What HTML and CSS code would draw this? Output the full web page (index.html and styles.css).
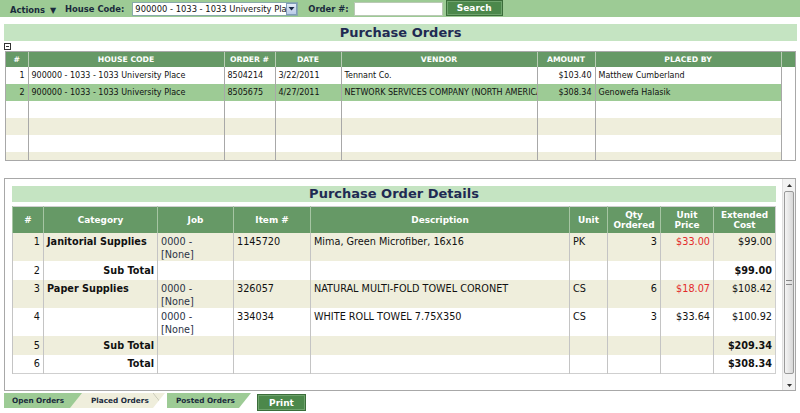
FILE: index.html
```html
<!DOCTYPE html>
<html>
<head>
<meta charset="utf-8">
<link rel="stylesheet" href="styles.css">
</head>
<body>
<div class="toolbar">
  <span class="lbl actions">Actions <span class="tri">▼</span></span>
  <span class="lbl house">House Code:</span>
  <div class="select"><span class="select-text">900000 - 1033 - 1033 University Place</span><span class="select-btn"><svg width="7" height="5" viewBox="0 0 7 5"><path d="M0.5 1h6L3.5 4.5z" fill="#1a2a44"/></svg></span></div>
  <span class="lbl order">Order #:</span>
  <div class="input"></div>
  <div class="btn search">Search</div>
</div>

<div class="title-bar">Purchase Orders</div>
<div class="toggle"><svg width="7" height="7" viewBox="0 0 7 7"><rect x="0.5" y="0.5" width="6" height="6" fill="#fff" stroke="#333"/><path d="M2 3.5h3" stroke="#333"/></svg></div>

<div class="po-wrap">
  <table class="po">
    <colgroup><col style="width:22px"><col style="width:196px"><col style="width:51px"><col style="width:66px"><col style="width:196px"><col style="width:58px"><col style="width:186px"><col></colgroup>
    <thead><tr><th>#</th><th>HOUSE CODE</th><th>ORDER #</th><th>DATE</th><th>VENDOR</th><th>AMOUNT</th><th>PLACED BY</th><th></th></tr></thead>
    <tbody>
      <tr class="odd"><td class="num">1</td><td>900000 - 1033 - 1033 University Place</td><td>8504214</td><td>3/22/2011</td><td>Tennant Co.</td><td class="r">$103.40</td><td>Matthew Cumberland</td><td class="gut"></td></tr>
      <tr class="sel"><td class="num">2</td><td>900000 - 1033 - 1033 University Place</td><td>8505675</td><td>4/27/2011</td><td>NETWORK SERVICES COMPANY (NORTH AMERICA)</td><td class="r">$308.34</td><td>Genowefa Halasik</td><td class="gut"></td></tr>
      <tr class="odd"><td></td><td></td><td></td><td></td><td></td><td></td><td></td><td class="gut"></td></tr>
      <tr class="even"><td></td><td></td><td></td><td></td><td></td><td></td><td></td><td class="gut"></td></tr>
      <tr class="odd"><td></td><td></td><td></td><td></td><td></td><td></td><td></td><td class="gut"></td></tr>
      <tr class="even"><td></td><td></td><td></td><td></td><td></td><td></td><td></td><td class="gut"></td></tr>
    </tbody>
  </table>
</div>

<div class="details">
  <div class="details-body">
    <div class="title-bar sub">Purchase Order Details</div>
    <table class="dt">
      <colgroup><col style="width:31px"><col style="width:114px"><col style="width:76px"><col style="width:77px"><col style="width:259px"><col style="width:38px"><col style="width:53px"><col style="width:53px"><col style="width:62px"></colgroup>
      <thead><tr><th>#</th><th>Category</th><th>Job</th><th>Item #</th><th>Description</th><th>Unit</th><th>Qty<br>Ordered</th><th>Unit<br>Price</th><th>Extended<br>Cost</th></tr></thead>
      <tbody>
        <tr class="even two"><td class="num">1</td><td class="b">Janitorial Supplies</td><td class="job">0000 -<br>[None]</td><td>1145720</td><td>Mima, Green Microfiber, 16x16</td><td>PK</td><td class="r">3</td><td class="r red">$33.00</td><td class="r">$99.00</td></tr>
        <tr class="odd one"><td class="num">2</td><td class="b r">Sub Total</td><td></td><td></td><td></td><td></td><td></td><td></td><td class="r b">$99.00</td></tr>
        <tr class="even two"><td class="num">3</td><td class="b">Paper Supplies</td><td class="job">0000 -<br>[None]</td><td>326057</td><td>NATURAL MULTI-FOLD TOWEL CORONET</td><td>CS</td><td class="r">6</td><td class="r red">$18.07</td><td class="r">$108.42</td></tr>
        <tr class="odd two"><td class="num">4</td><td></td><td class="job">0000 -<br>[None]</td><td>334034</td><td>WHITE ROLL TOWEL 7.75X350</td><td>CS</td><td class="r">3</td><td class="r">$33.64</td><td class="r">$100.92</td></tr>
        <tr class="even one"><td class="num">5</td><td class="b r">Sub Total</td><td></td><td></td><td></td><td></td><td></td><td></td><td class="r b">$209.34</td></tr>
        <tr class="odd one"><td class="num">6</td><td class="b r">Total</td><td></td><td></td><td></td><td></td><td></td><td></td><td class="r b">$308.34</td></tr>
      </tbody>
    </table>
  </div>
  <div class="vscroll">
    <div class="arrow up"><svg width="5" height="3" viewBox="0 0 5 3"><path d="M0 3h5L2.5 0z" fill="#333"/></svg></div>
    <div class="thumb"><span class="grip"></span></div>
    <div class="track"></div>
    <div class="arrow down"><svg width="5" height="3" viewBox="0 0 5 3"><path d="M0 0h5L2.5 3z" fill="#333"/></svg></div>
  </div>
</div>

<div class="tabs">
  <div class="tab open">Open Orders</div>
  <div class="tab placed">Placed Orders</div>
  <div class="tab posted">Posted Orders</div>
  <div class="btn print">Print</div>
</div>
</body>
</html>
```
FILE: styles.css
```css
* { box-sizing: border-box; }
body {
  margin: 0;
  font-family: "DejaVu Sans", Verdana, sans-serif;
  background: #fff;
  color: #1a2233;
  width: 800px;
  height: 413px;
  overflow: hidden;
}
.toolbar {
  height: 17px;
  background: #9dcb95;
  display: flex;
  align-items: center;
  padding-left: 10px;
}
.lbl {
  font-weight: bold;
  font-size: 8.4px;
  color: #1a2a3c;
}
.actions { margin-top: 3px; }
.tri { font-size: 8px; margin-left: 2px; }
.house { margin-left: 9px; }
.select {
  margin-left: 8px;
  width: 166px;
  height: 14px;
  background: #fff;
  border: 1px solid #8aa;
  display: flex;
  align-items: center;
  overflow: hidden;
}
.select-text {
  flex: 1;
  font-size: 8.4px;
  white-space: nowrap;
  overflow: hidden;
  padding-left: 2px;
  color: #111;
}
.select-btn {
  width: 11px;
  height: 12px;
  background: linear-gradient(#e4ecf8, #b9cbe8);
  border: 1px solid #7f9db9;
  display: flex;
  align-items: center;
  justify-content: center;
}
.order { margin-left: 10px; }
.input {
  margin-left: 5px;
  width: 89px;
  height: 14px;
  background: #fff;
  border: 1px solid #b9c9b4;
}
.btn {
  background: #4c884b;
  color: #fff;
  font-weight: bold;
  display: flex;
  align-items: center;
  justify-content: center;
  border: 1px solid #3b6d3a;
  box-shadow: inset 0 0 0 1px #6fa46d;
}
.search {
  margin-left: 3px;
  width: 57px;
  height: 16px;
  font-size: 9px;
  align-self: flex-start;
}
.title-bar {
  margin: 7px 3px 0 4px;
  height: 17px;
  background: #c5e4c2;
  text-align: center;
  font-weight: bold;
  font-size: 13px;
  line-height: 18px;
  color: #1f2a52;
}
.toggle {
  margin: 2px 0 0 4px;
  height: 8px;
  line-height: 0;
}
.po-wrap {
  margin-left: 5px;
  width: 791px;
  height: 110px;
  border: 1px solid #a8a8a8;
  overflow: hidden;
}
.po {
  width: 100%;
  table-layout: fixed;
  border-collapse: collapse;
  font-size: 8px;
  color: #111;
}
.po th {
  background: #669966;
  color: #fff;
  font-weight: bold;
  font-size: 7.7px;
  height: 15px;
  padding: 0;
  border-left: 1px solid #b8cdb4;
  white-space: nowrap;
}
.po th:first-child, .po td:first-child { border-left: none; }
.po td {
  height: 17px;
  padding: 0 3px;
  border-left: 1px solid #a8a8a8;
  white-space: nowrap;
  overflow: hidden;
}
.po tr.odd td { background: #fff; }
.po tr.even td { background: #efeedc; }
.po tr.sel td { background: #9dcb95; }
.po td.gut { background: #fff !important; }
.num { text-align: right; }
.r { text-align: right; }
.details {
  margin: 17px 0 0 4px;
  width: 792px;
  height: 213px;
  border: 1px solid #a8a8a8;
  display: flex;
}
.details-body {
  flex: 1;
  padding: 7px 6px 0 7px;
}
.title-bar.sub {
  margin: 0;
  height: 16px;
  line-height: 16px;
}
.dt {
  margin-top: 4px;
  width: 763px;
  table-layout: fixed;
  border-collapse: collapse;
  font-size: 9.7px;
  color: #111;
  border: 1px solid #cfcfcf;
}
.dt th {
  background: #669966;
  color: #fff;
  font-weight: bold;
  font-size: 8.9px;
  line-height: 10px;
  height: 26px;
  padding: 0;
  border-left: 1px solid #a6c5a3;
}
.dt td {
  padding: 2px 3px 0;
  line-height: 13px;
  vertical-align: top;
  border-left: 1px solid #c4c4c4;
}
.dt tr.two td { height: 28px; }
.dt tr.one td { height: 19px; vertical-align: middle; padding-top: 0; }
.dt tr.even td { background: #efeedc; }
.dt tr.odd td { background: #fff; }
.dt .b { font-weight: bold; }
.dt .job { color: #2b3346; }
.dt .red { color: #e32b2b; }
.vscroll {
  width: 15px;
  display: flex;
  flex-direction: column;
  background: #f2f2f2;
  border-left: 1px solid #e0e0e0;
}
.arrow {
  height: 12px;
  display: flex;
  align-items: center;
  justify-content: center;
}
.arrow.down { height: 9px; }
.thumb {
  height: 183px;
  margin: 0 1px;
  border: 1px solid #9a9a9a;
  border-radius: 2px;
  background: linear-gradient(90deg, #f4f4f4, #d8d8d8);
  display: flex;
  align-items: center;
  justify-content: center;
}
.grip {
  width: 6px;
  height: 5px;
  border-top: 1px solid #888;
  border-bottom: 1px solid #888;
}
.track { flex: 1; }
.tabs {
  margin: 2px 0 0 4px;
  display: flex;
  align-items: flex-start;
}
.tab {
  height: 15px;
  font-size: 7.3px;
  font-weight: bold;
  line-height: 15px;
  color: #1a2a3c;
  clip-path: polygon(0 0, 100% 0, calc(100% - 12px) 100%, 0 100%);
}
.tab.open {
  width: 78px;
  background: #9dcb95;
  padding-left: 8px;
  position: relative;
  z-index: 2;
}
.tab.placed {
  width: 95px;
  margin-left: -12px;
  padding-left: 21px;
  background: #efeedc;
  position: relative;
  z-index: 1;
}
.tab.placed::after {
  content: "";
  position: absolute;
  right: 0; top: 0; bottom: 0;
  width: 12px;
  background: linear-gradient(to top right, transparent calc(50% - 0.7px), #c8c8b8 50%, transparent calc(50% + 0.7px));
}
.tab.posted {
  width: 84px;
  margin-left: 2px;
  padding-left: 9px;
  background: #9dcb95;
}
.print {
  margin: 1px 0 0 6px;
  width: 49px;
  height: 17px;
  font-size: 9px;
}
```
